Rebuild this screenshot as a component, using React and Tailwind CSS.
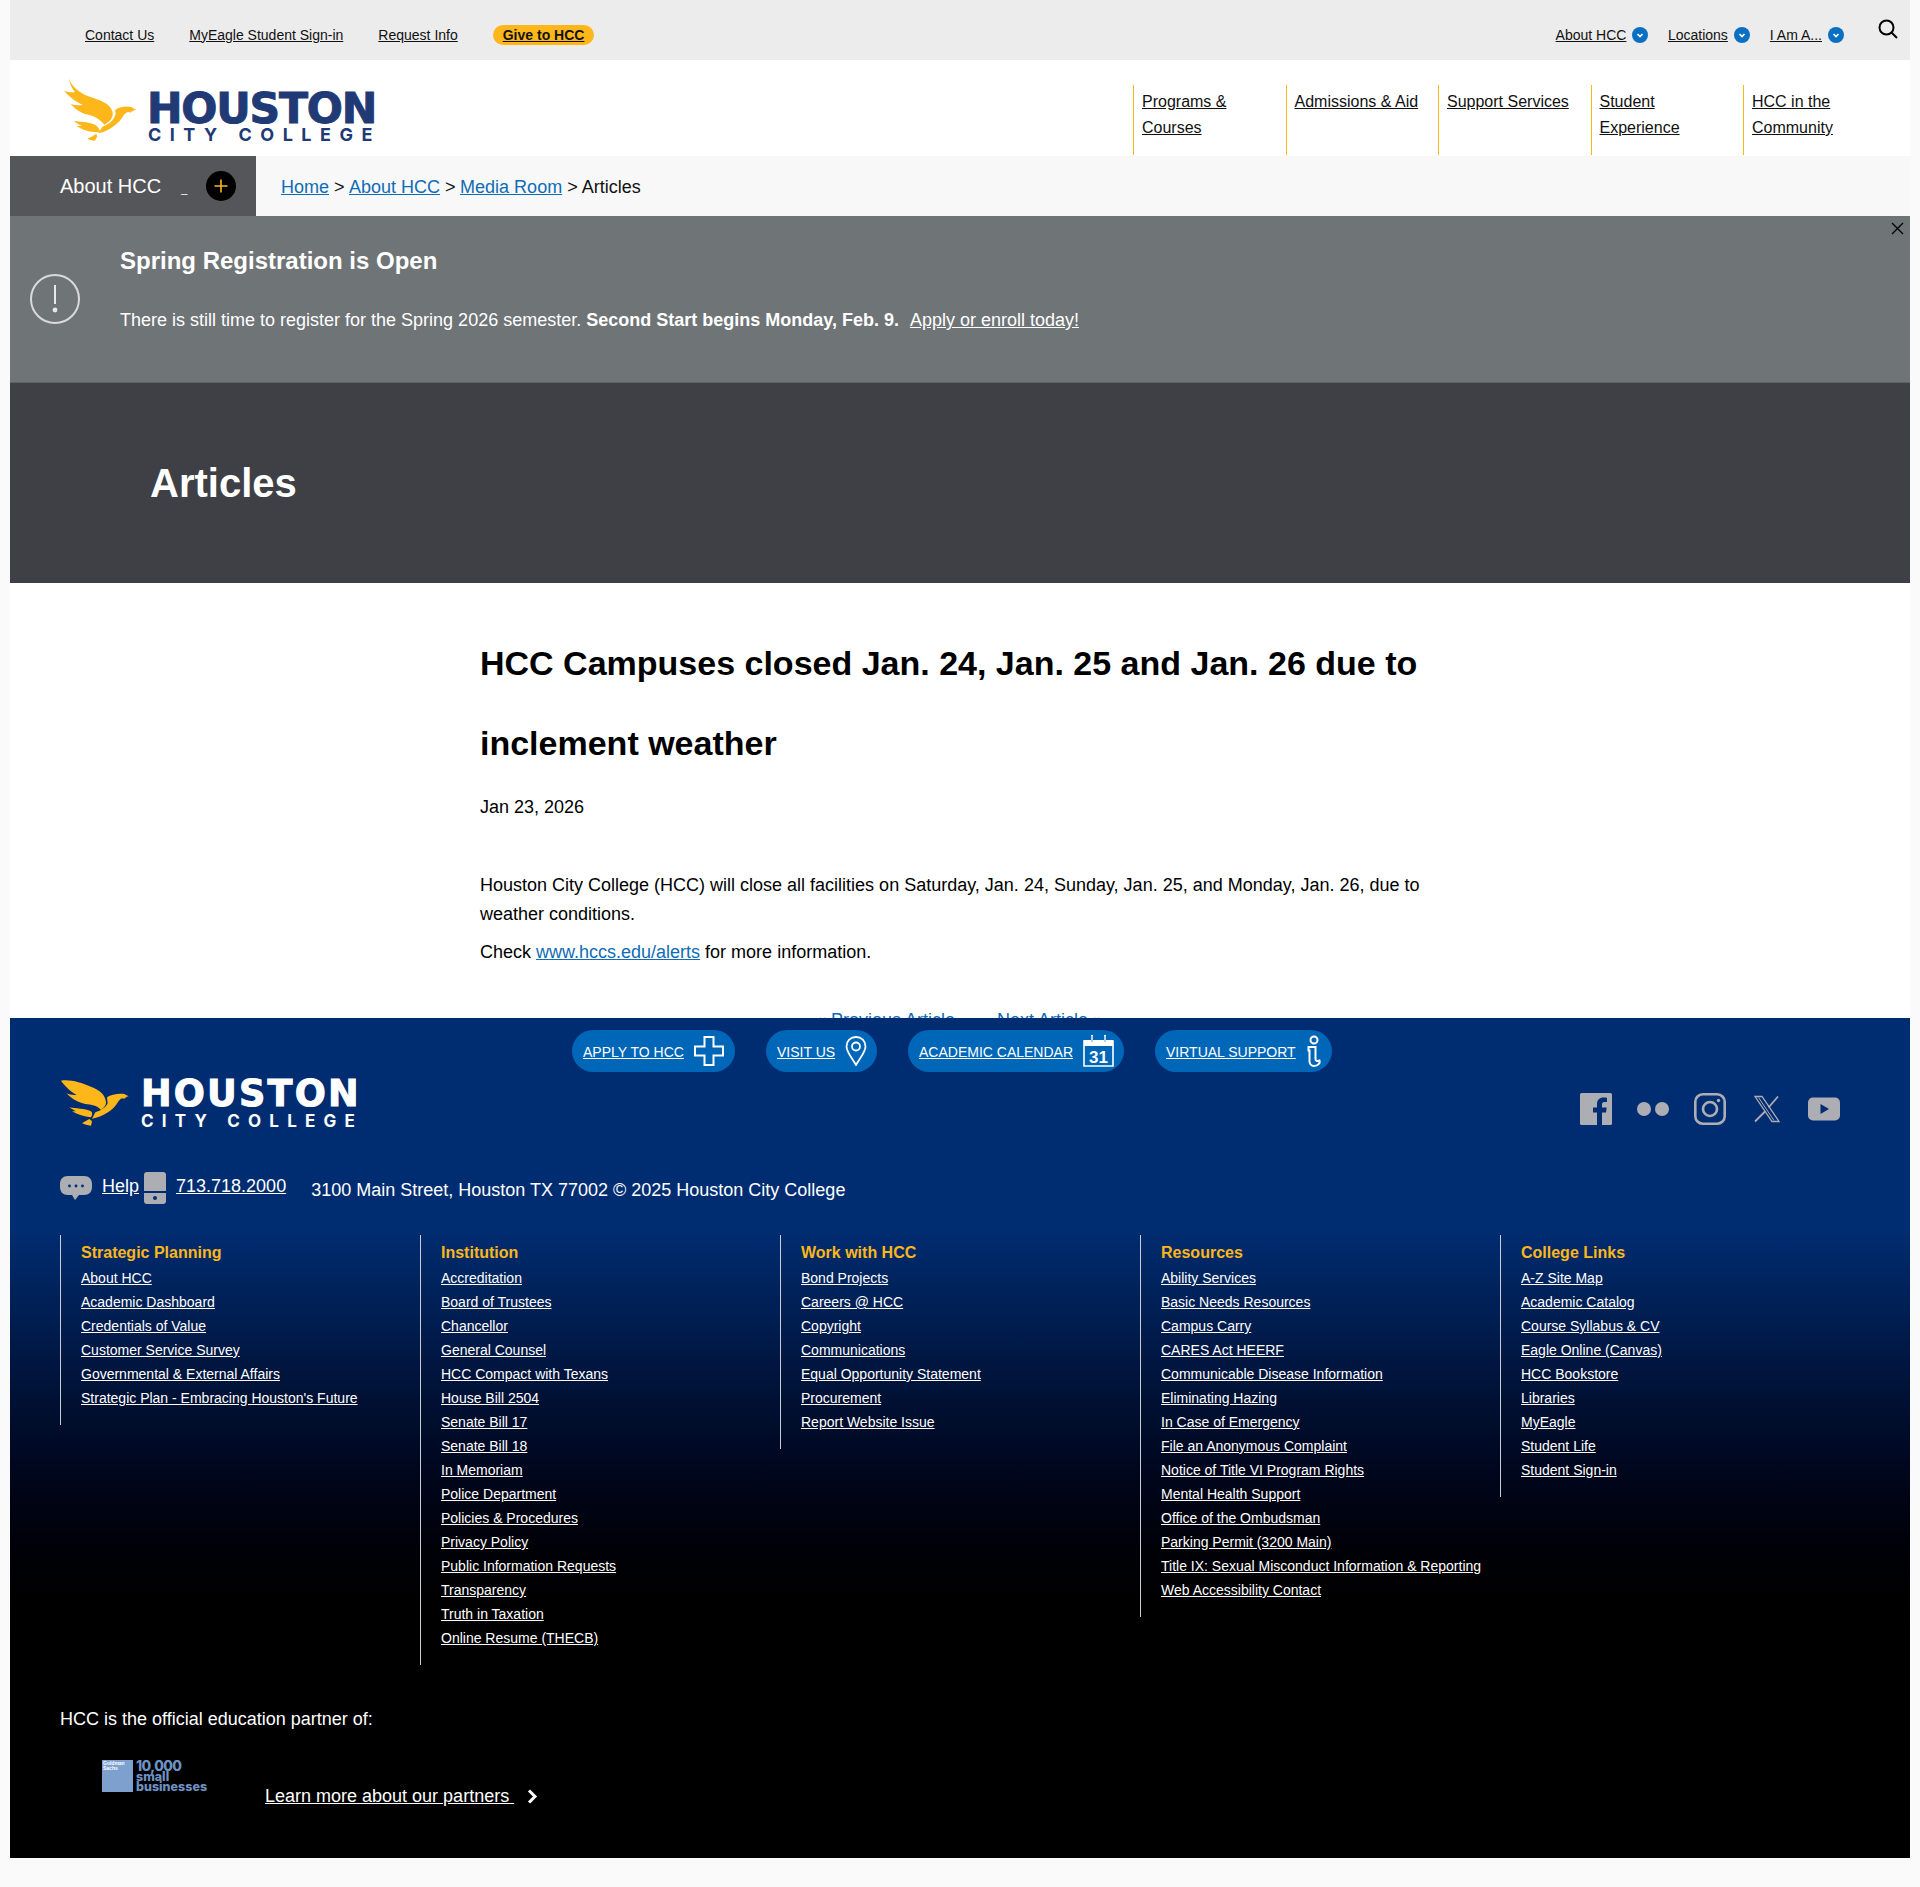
import React from "react";

const FONT = "font-['Liberation_Sans',Arial,sans-serif]";

const cols = [
  { t: "Strategic Planning", l: ["About HCC", "Academic Dashboard", "Credentials of Value", "Customer Service Survey", "Governmental & External Affairs", "Strategic Plan - Embracing Houston's Future"] },
  { t: "Institution", l: ["Accreditation", "Board of Trustees", "Chancellor", "General Counsel", "HCC Compact with Texans", "House Bill 2504", "Senate Bill 17", "Senate Bill 18", "In Memoriam", "Police Department", "Policies & Procedures", "Privacy Policy", "Public Information Requests", "Transparency", "Truth in Taxation", "Online Resume (THECB)"] },
  { t: "Work with HCC", l: ["Bond Projects", "Careers @ HCC", "Copyright", "Communications", "Equal Opportunity Statement", "Procurement", "Report Website Issue"] },
  { t: "Resources", l: ["Ability Services", "Basic Needs Resources", "Campus Carry", "CARES Act HEERF", "Communicable Disease Information", "Eliminating Hazing", "In Case of Emergency", "File an Anonymous Complaint", "Notice of Title VI Program Rights", "Mental Health Support", "Office of the Ombudsman", "Parking Permit (3200 Main)", "Title IX: Sexual Misconduct Information & Reporting", "Web Accessibility Contact"] },
  { t: "College Links", l: ["A-Z Site Map", "Academic Catalog", "Course Syllabus & CV", "Eagle Online (Canvas)", "HCC Bookstore", "Libraries", "MyEagle", "Student Life", "Student Sign-in"] },
];

function Dot() {
  return (
    <span className="ml-[6px] flex h-4 w-4 items-center justify-center rounded-full bg-[#0b6fc2]">
      <svg width="8" height="8" viewBox="0 0 8 8" fill="none" stroke="#fff" strokeWidth="1.6"><path d="M1.5 3 L4 5.5 L6.5 3" /></svg>
    </span>
  );
}

function Pill({ label, icon, cls }) {
  return (
    <a className={`flex h-[42px] items-center justify-between rounded-[21px] bg-[#0066b8] pl-[11px] text-[14px] text-white underline ${cls}`}>
      <span className="mt-[2px]">{label}</span>
      {icon}
    </a>
  );
}

export default function App() {
  return (
    <div className={`min-h-[1887px] bg-[#fafafa] px-[10px] ${FONT}`}>
      {/* utility bar */}
      <div className="flex h-[60px] items-center justify-between bg-[#ececec] pl-[75px] pr-[12px] pt-[10px] text-[14px] text-[#111]">
        <div className="flex items-center gap-[35px]">
          <a className="underline">Contact Us</a>
          <a className="underline">MyEagle Student Sign-in</a>
          <a className="underline">Request Info</a>
          <a className="flex h-5 items-center rounded-[10px] bg-[#fdb71a] px-[10px] font-bold underline">Give to HCC</a>
        </div>
        <div className="flex items-center">
          <a className="underline">About HCC</a><Dot />
          <a className="ml-[19.5px] underline">Locations</a><Dot />
          <a className="ml-[20px] underline">I Am A...</a><Dot />
          <svg className="ml-[34px] -mt-[12px]" width="20" height="20" viewBox="0 0 20 20" fill="none" stroke="#000" strokeWidth="2"><circle cx="8.5" cy="8.5" r="7" /><path d="M13.5 13.5 L19 19" /></svg>
        </div>
      </div>

      {/* header */}
      <div className="flex h-[96px] items-start justify-between bg-white pr-[14.5px]">
        <div className="ml-[50px] mt-[14px] flex">
          <svg width="84" height="72" viewBox="0 0 252 216" fill="#fdb71a">
            <path d="M27 13 C32 35 55 55 85 67 C115 78 150 85 158 115 C160 130 150 145 133 152 C120 135 100 125 85 122 C70 120 50 110 32 90 C45 94 58 95 68 92 C50 85 30 70 12 50 C25 55 35 55 45 55 C35 42 28 28 27 13 Z" />
            <path d="M165 108 C178 98 200 95 215 100 L228 107 C220 108 215 112 212 116 C205 112 198 115 190 125 C180 145 150 170 115 178 L127 158 C150 150 165 135 167 118 Z" />
            <path d="M42 140 C60 145 80 142 100 150 C112 155 120 165 120 175 C100 175 72 172 50 156 L66 156 C58 152 48 147 42 140 Z" />
            <path d="M108 180 L95 188 L82 194 L90 198 L105 200 L112 186 Z" />
          </svg>
          <div className="ml-[3px] mt-[15px] flex w-[232px] flex-col text-[#1f3a75]">
            <span className="font-['DejaVu_Sans',sans-serif] text-[42.5px] font-bold leading-[40px] tracking-[-1.2px] [-webkit-text-stroke:1px_#1f3a75]">HOUSTON</span>
            <span className="-mt-[1px] whitespace-nowrap pl-[1px] font-['Inter',sans-serif] text-[18px] font-bold leading-[14px] tracking-[8.5px]">CITY COLLEGE</span>
          </div>
        </div>
        <div className="mt-[25px] flex h-[70px] text-[16px] leading-[26px] text-[#111]">
          {[["Programs &", "Courses"], ["Admissions & Aid"], ["Support Services"], ["Student", "Experience"], ["HCC in the", "Community"]].map((n, i) => (
            <div key={i} className="w-[152.5px] border-l border-[#fdb71a] pl-[8px] pt-[4px]">
              {n.map((x) => <a key={x} className="block underline">{x}</a>)}
            </div>
          ))}
        </div>
      </div>

      {/* sub nav */}
      <div className="flex h-[60px] bg-[#f8f8f8]">
        <div className="flex w-[246px] items-center bg-[#55565a] pl-[50px] text-white">
          <span className="text-[20px] -mt-[1px]">About HCC</span>
          <span className="ml-[20px] mt-[6px] text-[11px]">_</span>
          <span className="ml-[19px] flex h-[30px] w-[30px] items-center justify-center rounded-full bg-black">
            <svg width="14" height="14" viewBox="0 0 14 14" stroke="#fdb71a" strokeWidth="1.6"><path d="M7 0.5 V13.5 M0.5 7 H13.5" /></svg>
          </span>
        </div>
        <div className="flex items-center pl-[25px] pt-[2px] text-[18px] text-[#111]">
          <a className="text-[#0f6cb5] underline">Home</a><span className="-mr-[0.5px]">&nbsp;&gt;&nbsp;</span>
          <a className="text-[#0f6cb5] underline">About HCC</a><span className="-mr-[0.5px]">&nbsp;&gt;&nbsp;</span>
          <a className="text-[#0f6cb5] underline">Media Room</a><span>&nbsp;&gt; Articles</span>
        </div>
      </div>

      {/* alert */}
      <div className="relative flex h-[167px] border-b border-[#5e6265] bg-[#6f7477] text-white">
        <div className="ml-[20px] mt-[58px] flex h-[50px] w-[50px] items-center justify-center rounded-full border-2 border-[#d9dadb]">
          <svg width="6" height="28" viewBox="0 0 6 28" fill="#e8e8e8"><rect x="2" y="0" width="2" height="19" /><circle cx="3" cy="25" r="2.4" /></svg>
        </div>
        <div className="ml-[40px]">
          <div className="mt-[31px] text-[24px] font-bold leading-[28px]">Spring Registration is Open</div>
          <div className="mt-[31px] text-[18px] leading-[28px]">
            There is still time to register for the Spring 2026 semester. <b>Second Start begins Monday, Feb. 9.</b>&nbsp; <a className="ml-[1px] underline">Apply or enroll today!</a>
          </div>
        </div>
        <svg className="absolute right-[6px] top-[6px]" width="13" height="13" viewBox="0 0 13 13" stroke="#000" strokeWidth="1.3"><path d="M1 1 L12 12 M12 1 L1 12" /></svg>
      </div>

      {/* title */}
      <div className="flex h-[200px] items-center bg-[#3f4045] pl-[140px]">
        <h2 className="text-[40px] font-bold text-white">Articles</h2>
      </div>

      {/* article */}
      <div className="h-[435px] overflow-hidden bg-white pl-[470px] pr-[470px] text-[18px] text-black">
        <h1 className="mt-[40px] text-[34px] font-bold leading-[80px]">HCC Campuses closed Jan. 24, Jan. 25 and Jan. 26 due to inclement weather</h1>
        <p className="mt-[10px] leading-[28px]">Jan 23, 2026</p>
        <p className="mt-[50px] leading-[29px]">Houston City College (HCC) will close all facilities on Saturday, Jan. 24, Sunday, Jan. 25, and Monday, Jan. 26, due to weather conditions.</p>
        <p className="mt-[9px] leading-[29px]">Check <a className="text-[#0f6cb5] underline">www.hccs.edu/alerts</a> for more information.</p>
        <div className="mt-[40px] flex pl-[336px] text-[#0f6cb5]">
          <a>« Previous Article</a>
          <a className="ml-[42px]">Next Article »</a>
        </div>
      </div>

      {/* footer */}
      <footer className="h-[840px] overflow-hidden bg-linear-to-b from-[#002d72] from-[25%] to-black to-[75%] text-white">
        <div className="flex pl-[562px] pt-[12px]">
          <Pill cls="w-[163px] pr-[11px]" label="APPLY TO HCC" icon={
            <svg width="30" height="30" viewBox="0 0 30 30" fill="none" stroke="#fff" strokeWidth="2"><path d="M10.5 1 H19.5 V10.5 H29 V19.5 H19.5 V29 H10.5 V19.5 H1 V10.5 H10.5 Z" /></svg>
          } />
          <Pill cls="ml-[31px] w-[111px] pr-[10px]" label="VISIT US" icon={
            <svg width="22" height="30" viewBox="0 0 22 30" fill="none" stroke="#fff" strokeWidth="1.8"><path d="M11 29 C7 22 1.5 16 1.5 10.5 C1.5 5 5.5 1 11 1 C16.5 1 20.5 5 20.5 10.5 C20.5 16 15 22 11 29 Z" /><circle cx="11" cy="10.5" r="4" /></svg>
          } />
          <Pill cls="ml-[31px] w-[216px] pr-[10px]" label="ACADEMIC CALENDAR" icon={
            <svg width="31" height="32" viewBox="0 0 31 32" fill="none"><path d="M1 6 H30 V31 H1 Z" stroke="#fff" strokeWidth="1.6" /><path d="M1 5 H30 V11 H1 Z" fill="#fff" /><path d="M9 0 V8 M22 0 V8" stroke="#fff" strokeWidth="2" /><path d="M9 1 V7 M22 1 V7" stroke="#0066b8" strokeWidth="0.6" /><text x="15.5" y="28" textAnchor="middle" fontSize="17" fontWeight="700" fill="#fff" fontFamily="Liberation Sans">31</text></svg>
          } />
          <Pill cls="ml-[31px] w-[177px] pr-[10px]" label="VIRTUAL SUPPORT" icon={
            <svg width="16" height="32" viewBox="0 0 16 32" fill="none" stroke="#fff" strokeWidth="2"><circle cx="8" cy="5" r="3.5" /><path d="M2.5 12 H9.5 V24 C9.5 26 11 26.5 13.5 25.5 C14.5 28 12 31 8 31 C5 31 3.5 28.5 3.5 26 V15.5 H2.5 Z" /></svg>
          } />
        </div>

        <div className="mt-[6px] flex items-start justify-between pr-[70px]">
          <div className="ml-[46px] -mt-[4px] flex">
            <svg width="84" height="60" viewBox="0 0 252 180" fill="#fdb71a">
              <path d="M15 20 C40 15 75 25 105 38 C130 48 148 60 150 85 C150 95 145 100 135 108 C125 95 105 92 88 90 C68 86 48 76 32 58 C42 62 52 64 62 62 C45 54 28 38 15 20 Z" />
              <path d="M153 70 C165 62 185 58 205 60 L218 67 C212 68 208 71 206 74 C198 70 192 74 186 84 C172 110 140 128 108 134 L118 115 C135 110 150 100 155 88 Z" />
              <path d="M40 100 C60 105 85 102 105 112 C110 116 110 122 105 130 C85 128 65 122 48 112 L60 112 C52 108 46 104 40 100 Z" />
              <path d="M100 135 L88 142 L78 148 L90 152 L105 155 L108 142 Z" />
            </svg>
            <div className="ml-[1px] mt-[3px] flex w-[224px] flex-col text-white">
              <span className="font-['DejaVu_Sans',sans-serif] text-[36.6px] font-bold leading-[33px] tracking-[2.2px] [-webkit-text-stroke:1px_#fff]">HOUSTON</span>
              <span className="mt-[4px] whitespace-nowrap font-['Inter',sans-serif] text-[17px] font-bold leading-[14px] tracking-[8.2px]">CITY COLLEGE</span>
            </div>
          </div>
          <div className="mt-[15px] flex items-center gap-[25px]">
            <svg width="32" height="32" viewBox="0 0 32 32"><rect width="32" height="32" rx="1.5" fill="#adaeb3" /><path d="M22 32 V19.5 H26 L26.7 14.5 H22 V11.5 C22 10 22.6 9 24.5 9 H27 V4.8 C26.5 4.7 25 4.5 23.4 4.5 C19.8 4.5 17 6.8 17 11 V14.5 H13 V19.5 H17 V32 Z" fill="#002d72" /></svg>
            <svg width="32" height="32" viewBox="0 0 32 32" fill="#adaeb3"><circle cx="7" cy="16" r="7" /><circle cx="25" cy="16" r="7" /></svg>
            <svg width="32" height="32" viewBox="0 0 32 32" fill="none" stroke="#adaeb3" strokeWidth="2.6"><rect x="1.3" y="1.3" width="29.4" height="29.4" rx="7.5" /><circle cx="16" cy="16" r="7" /><circle cx="24.5" cy="7.5" r="1.7" fill="#adaeb3" stroke="none" /></svg>
            <svg width="32" height="32" viewBox="0 0 32 32" fill="none" stroke="#adaeb3" strokeWidth="1.3"><path d="M4 3.5 H11 L28 28.5 H21 Z" /><path d="M27 3.5 L17.5 14.5 M14.5 18 L4 28.5" strokeWidth="1.8" /><path d="M7.5 4.5 L23 27.5" strokeWidth="1" /></svg>
            <svg width="32" height="32" viewBox="0 0 32 32"><rect y="4.5" width="32" height="23" rx="5" fill="#adaeb3" /><path d="M12.5 11 L21 16 L12.5 21 Z" fill="#002d72" /></svg>
          </div>
        </div>

        {/* help row */}
        <div className="ml-[50px] mt-[38px] flex h-[32px] items-start">
          <svg className="mt-[4px]" width="32" height="24" viewBox="0 0 32 24"><path d="M8 0 H24 C29 0 32 3 32 8 V11 C32 16 29 19 24 19 H19 L15 24 L12 19 H8 C3 19 0 16 0 11 V8 C0 3 3 0 8 0 Z" fill="#adaeb3" /><circle cx="9.5" cy="10" r="1.4" fill="#002d72" /><circle cx="16" cy="10" r="1.4" fill="#002d72" /><circle cx="22.5" cy="10" r="1.4" fill="#002d72" /></svg>
          <a className="ml-[10px] text-[18px] leading-[28px] underline">Help</a>
          <svg className="ml-[5px]" width="22" height="32" viewBox="0 0 22 32"><path d="M3 0 H19 C21 0 22 1 22 3 V19 H0 V3 C0 1 1 0 3 0 Z M0 21 H22 V29 C22 31 21 32 19 32 H3 C1 32 0 31 0 29 Z" fill="#adaeb3" /><circle cx="11" cy="26" r="2" fill="#002d72" /></svg>
          <a className="ml-[10px] text-[18px] leading-[28px] underline">713.718.2000</a>
          <span className="ml-[25px] mt-[4px] text-[18px] leading-[28px]">3100 Main Street, Houston TX 77002 © 2025 Houston City College</span>
        </div>

        {/* link columns */}
        <div className="ml-[50px] mt-[31px] grid h-[430px] grid-cols-[repeat(5,360px)] items-start">
          {cols.map((c) => (
            <div key={c.t} className="border-l border-[#c9ccd2] pb-[15px] pl-[20px] pt-[5px]">
              <div className="text-[16px] font-bold leading-[26px] text-[#fdb71a]">{c.t}</div>
              {c.l.map((x) => <a key={x} className="block text-[14px] leading-[24px] underline">{x}</a>)}
            </div>
          ))}
        </div>

        {/* partners */}
        <div className="ml-[50px] mt-[40px] text-[18px] leading-[28px]">HCC is the official education partner of:</div>
        <div className="ml-[92px] mt-[27px] flex items-start">
          <div className="flex w-[106px]">
            <div className="h-8 w-[31px] bg-[#7da0cf] pl-[1px] pt-[1px] text-[5px] font-bold leading-[5px] text-white">Goldman<br />Sachs</div>
            <div className="ml-[3px] flex w-[72px] flex-col text-[#6d92c4]">
              <span className="font-['Inter',sans-serif] text-[14px] font-extrabold leading-[12px] tracking-[-0.6px]">10,000</span>
              <span className="font-['Inter',sans-serif] text-[12.5px] font-extrabold leading-[10px]">small</span>
              <span className="font-['Inter',sans-serif] text-[12.5px] font-extrabold leading-[10px]">businesses</span>
            </div>
          </div>
          <a className="ml-[57px] mt-[22px] text-[18px] leading-[28px] underline">Learn more about our partners&nbsp;</a>
          <svg className="ml-[13px] mt-[29px]" width="11" height="15" viewBox="0 0 11 15" fill="none" stroke="#fff" strokeWidth="3"><path d="M2 1.5 L8 7.5 L2 13.5" /></svg>
        </div>
      </footer>
    </div>
  );
}
